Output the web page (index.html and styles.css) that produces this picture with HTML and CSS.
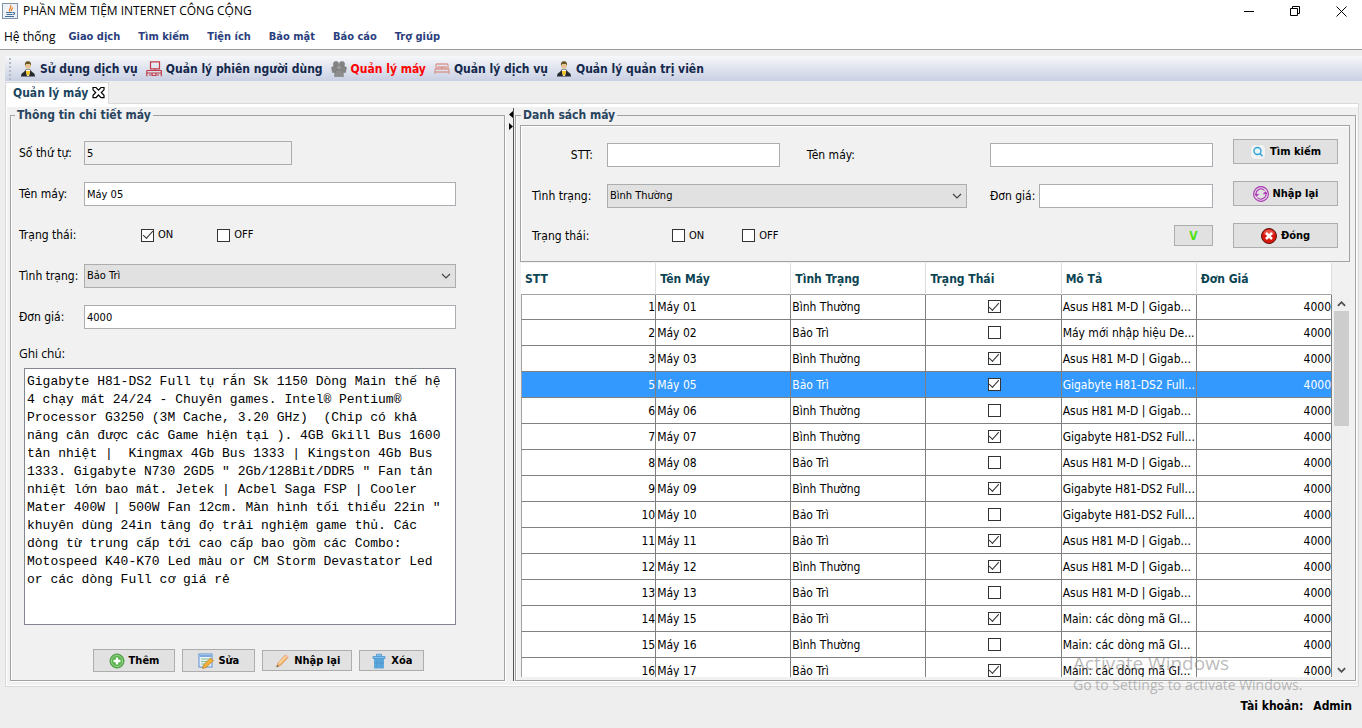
FILE: index.html
```html
<!DOCTYPE html>
<html lang="vi">
<head>
<meta charset="utf-8">
<title>PHẦN MỀM TIỆM INTERNET CÔNG CỘNG</title>
<link rel="stylesheet" href="styles.css">
</head>
<body>
<svg class="defs" aria-hidden="true">
  <symbol id="user" viewBox="0 0 16 16"><path d="M1 15.500c0-2.500 1-3.500 3-4.500l2-3h4l2 3c2 1 3 2 3 4.500z" fill="#26282c"/><path d="M5.500 8.500h5L9 15H7z" fill="#fff"/><path d="M6 10h4l-.5 3L8 15l-1.500-2z" fill="#f3c51c"/><circle cx="8" cy="4.800" r="3" fill="#e5c497"/><path d="M5 5C4.500 1.500 6 .3 8 .3S11.500 1.500 11 5l-1-2H6z" fill="#6b5524"/></symbol>
  <symbol id="desk" viewBox="0 0 16 16"><path d="M4.500.8h9v7h-9zM9 8v2M.8 9.500h14.500v5.800M.8 9.500v5.800M.8 12h14.500M6 12v2.500h4V12M3 14h2M11 14h2" fill="none" stroke="#c03a48" stroke-width="1.200"/></symbol>
  <symbol id="group" viewBox="0 0 16 16"><g fill="#858585" stroke="#6f6f6f" stroke-width=".5"><circle cx="5" cy="3" r="2.600"/><circle cx="11" cy="3" r="2.600"/><path d="M.5 6.500 3 5h10l2.500 1.500-1 5H1.500z"/><circle cx="8" cy="6.500" r="2.700" fill="#999"/><path d="M3.500 15.500 4 11l2-2h4l2 2 .5 4.500z" fill="#8d8d8d"/></g></symbol>
  <symbol id="bed" viewBox="0 0 16 16"><path d="M2 8V4q0-1 1-1h10q1 0 1 1v4M1 13V9q0-1 1-1h12q1 0 1 1v4M1 11h14M4 8V6h3.500v2M8.500 8V6H12v2" fill="none" stroke="#d99a94" stroke-width="1.300"/></symbol>
  <symbol id="chev" viewBox="0 0 10 6"><path d="M1 1l4 4 4-4" fill="none" stroke="#444" stroke-width="1.200"/></symbol>
  <symbol id="pencil" viewBox="0 0 16 16"><path d="M2.500 14 4 10l7-8 3 2.500-7.500 8z" fill="#f1b56c" stroke="#d3905a" stroke-width=".7"/><path d="M5 10.500 12 3" stroke="#fbdcae" stroke-width="1.300"/><path d="M2.500 14 3.300 12l1.500 1.300z" fill="#555"/><path d="m10.500 2.500 1.300-1.300 3 2.500L13.500 5z" fill="#f0b8a8"/></symbol>
</svg>

<header class="titlebar">
  <svg class="java" viewBox="0 0 16 16"><rect x=".5" y=".5" width="15" height="15" fill="#eef2f6" stroke="#7e93aa"/><path d="M8 8.500C5.500 6 10.500 5 8.500 2M9.500 8c-1-1.500 1.500-2 1-3.500" fill="none" stroke="#e8791d" stroke-width="1.200"/><path d="M4 9.500h6.500M4.500 11.500h5.500M3 13.500h9M11 9.500c2.500-.5 2 2-.5 2" fill="none" stroke="#3f6d98" stroke-width="1.100"/></svg>
  <h1>PHẦN MỀM TIỆM INTERNET CÔNG CỘNG</h1>
  <div class="winbtns">
    <button aria-label="Thu nhỏ"><svg viewBox="0 0 11 11"><path d="M0 5.500h10" stroke="#000"/></svg></button>
    <button aria-label="Khôi phục"><svg viewBox="0 0 11 11"><path d="M.5 2.500h7v7h-7zM2.500 2.500v-2h7v7h-2" fill="none" stroke="#000"/></svg></button>
    <button aria-label="Thoát"><svg viewBox="0 0 11 11"><path d="M.5.5l10 10M10.500.5l-10 10" stroke="#000"/></svg></button>
  </div>
</header>
<nav class="menu">
  <button class="sys">Hệ thống</button><button>Giao dịch</button><button>Tìm kiếm</button><button>Tiện ích</button><button>Bảo mật</button><button>Báo cáo</button><button>Trợ giúp</button>
</nav>

<div class="toolbar">
  <span class="grip"></span>
  <button><svg><use href="#user"/></svg>Sử dụng dịch vụ</button>
  <button><svg><use href="#desk"/></svg>Quản lý phiên người dùng</button>
  <button class="current"><svg><use href="#group"/></svg>Quản lý máy</button>
  <button><svg><use href="#bed"/></svg>Quản lý dịch vụ</button>
  <button><svg><use href="#user"/></svg>Quản lý quản trị viên</button>
</div>

<div class="tabs">
  <div class="tab">Quản lý máy
    <button aria-label="Đóng thẻ"><svg viewBox="0 0 13 13"><path d="M1 1.500h3l2.500 2.700L9 1.500h3v2.300L9.300 6.500 12 9.300v2.400H9L6.500 9 4 11.700H1V9.300l2.700-2.800L1 3.800z" fill="#fff" stroke="#000" stroke-width="1.200"/></svg></button>
  </div>
  <span class="tabfill"></span>
</div>

<main class="pane">
  <fieldset class="group">
    <legend>Thông tin chi tiết máy</legend>
    <form class="detail">
      <div class="row"><label for="d-no">Số thứ tự:</label><input class="text short" id="d-no" value="5" readonly></div>
      <div class="row"><label for="d-name">Tên máy:</label><input class="text" id="d-name" value="Máy 05"></div>
      <div class="row"><span class="lbl">Trạng thái:</span>
        <div class="checks"><label><input type="checkbox" checked>ON</label><label><input type="checkbox">OFF</label></div></div>
      <div class="row"><label for="d-state">Tình trạng:</label>
        <div class="combo"><select id="d-state"><option>Bảo Trì</option><option>Bình Thường</option></select><svg><use href="#chev"/></svg></div></div>
      <div class="row"><label for="d-price">Đơn giá:</label><input class="text" id="d-price" value="4000"></div>
      <label class="notelabel" for="d-note">Ghi chú:</label>
      <textarea id="d-note" spellcheck="false">Gigabyte H81-DS2 Full tụ rắn Sk 1150 Dòng Main thế hệ 4 chạy mát 24/24 - Chuyên games. Intel® Pentium® Processor G3250 (3M Cache, 3.20 GHz)  (Chip có khả năng cân được các Game hiện tại ). 4GB Gkill Bus 1600 tản nhiệt |  Kingmax 4Gb Bus 1333 | Kingston 4Gb Bus 1333. Gigabyte N730 2GD5 " 2Gb/128Bit/DDR5 " Fan tản nhiệt lớn bao mát. Jetek | Acbel Saga FSP | Cooler Mater 400W | 500W Fan 12cm. Màn hình tối thiểu 22in " khuyên dùng 24in tăng đọ trải nghiệm game thủ. Các dòng từ trung cấp tới cao cấp bao gồm các Combo: Motospeed K40-K70 Led màu or CM Storm Devastator Led or các dòng Full cơ giá rẻ</textarea>
      <div class="actions">
        <button type="button" class="btn tall"><svg viewBox="0 0 16 16"><circle cx="8" cy="8" r="7" fill="#58b14a" stroke="#4a9a45"/><circle cx="8" cy="8" r="5.600" fill="none" stroke="#a9dca0" stroke-width=".8"/><path d="M8 4.500v7M4.500 8h7" stroke="#fff" stroke-width="2.400"/></svg>Thêm</button>
        <button type="button" class="btn tall"><svg viewBox="0 0 16 16"><rect x="1" y="1" width="13" height="13" fill="#eaf3fc" stroke="#5b8fd2"/><path d="M1.500 3h12" stroke="#7fa9de" stroke-width="2"/><path d="M3 6h9M3 8.500h7M3 11h5" stroke="#85be83" stroke-width="1.200"/><path d="M4.500 15.500 5.500 12l7-7 3 2.500-7.500 7z" fill="#f4b13a" stroke="#b57a23" stroke-width=".7"/></svg>Sửa</button>
        <button type="button" class="btn"><svg><use href="#pencil"/></svg>Nhập lại</button>
        <button type="button" class="btn"><svg viewBox="0 0 16 16"><path d="M3 5h10v10.500H3z" fill="#5da8dc"/><path d="M2 3.500h12v2H2zM5.500 3.500V1.200h5v2.300" fill="#83c1ea" stroke="#4c94cb" stroke-width=".8"/><path d="M6 7v8M10 7v8M3 10h10" stroke="#4b93ca" stroke-width=".7"/></svg>Xóa</button>
      </div>
    </form>
  </fieldset>

  <div class="split"><svg viewBox="0 0 5 19"><path d="M4 0v7L0 3.500zM0 12v7l4-3.500z" fill="#000"/></svg></div>

  <fieldset class="group list">
    <legend>Danh sách máy</legend>
    <form class="filter">
      <div class="fields">
        <label class="end" for="f-no">STT:</label>
        <div class="pair"><input class="text no" id="f-no"><label for="f-name">Tên máy:</label></div>
        <div class="third"><input class="text" id="f-name"></div>
        <label for="f-state">Tình trạng:</label>
        <div class="combo"><select id="f-state"><option>Bình Thường</option><option>Bảo Trì</option></select><svg><use href="#chev"/></svg></div>
        <div class="third"><label for="f-price">Đơn giá:</label><input class="text" id="f-price"></div>
        <span class="lbl">Trạng thái:</span>
        <div class="checks"><label><input type="checkbox">ON</label><label><input type="checkbox">OFF</label></div>
        <button type="button" class="btn v">V</button>
      </div>
      <div class="side">
        <button type="button" class="btn"><svg viewBox="0 0 16 16"><rect x=".5" y=".5" width="15" height="15" rx="4" fill="#f2f2f2" stroke="#ddd"/><circle cx="7.500" cy="7" r="3.500" fill="#e5f6fd" stroke="#36a3d8" stroke-width="1.400"/><path d="m10 9.500 2.500 2.700" stroke="#36a3d8" stroke-width="1.600"/></svg>Tìm kiếm</button>
        <button type="button" class="btn"><svg viewBox="0 0 16 16"><g fill="none" stroke="#ab2fb5" stroke-width="1.100"><circle cx="8" cy="8" r="7.400"/><path d="M3.500 9.500a4.800 4.800 0 0 1 8-5M12.500 6.500a4.800 4.800 0 0 1-8 5M2 8l1.500 2L5.500 8M10.500 8l2-2L14 8"/></g></svg>Nhập lại</button>
        <button type="button" class="btn"><svg viewBox="0 0 16 16"><circle cx="8" cy="8" r="7.500" fill="#d8170d" stroke="#5a1510"/><path d="M2.500 6a5.700 5.700 0 0 1 11 0q-5.500 2-11 0" fill="#ea5146"/><path d="m5 5 6 6M11 5l-6 6" stroke="#fff" stroke-width="2.600"/></svg>Đóng</button>
      </div>
    </form>
    <div class="tablebox">
      <div class="scroller">
      <table>
        <thead><tr><th>STT</th><th>Tên Máy</th><th>Tình Trạng</th><th>Trạng Thái</th><th>Mô Tả</th><th>Đơn Giá</th></tr></thead>
        <tbody>
          <tr><td>1</td><td>Máy 01</td><td>Bình Thường</td><td><input type="checkbox" aria-label="Máy 01" checked></td><td>Asus H81 M-D | Gigab...</td><td>4000</td></tr>
          <tr><td>2</td><td>Máy 02</td><td>Bảo Trì</td><td><input type="checkbox" aria-label="Máy 02"></td><td>Máy mới nhập hiệu De...</td><td>4000</td></tr>
          <tr><td>3</td><td>Máy 03</td><td>Bình Thường</td><td><input type="checkbox" aria-label="Máy 03" checked></td><td>Asus H81 M-D | Gigab...</td><td>4000</td></tr>
          <tr class="selected"><td>5</td><td>Máy 05</td><td>Bảo Trì</td><td><input type="checkbox" aria-label="Máy 05" checked></td><td>Gigabyte H81-DS2 Full...</td><td>4000</td></tr>
          <tr><td>6</td><td>Máy 06</td><td>Bình Thường</td><td><input type="checkbox" aria-label="Máy 06"></td><td>Asus H81 M-D | Gigab...</td><td>4000</td></tr>
          <tr><td>7</td><td>Máy 07</td><td>Bình Thường</td><td><input type="checkbox" aria-label="Máy 07" checked></td><td>Gigabyte H81-DS2 Full...</td><td>4000</td></tr>
          <tr><td>8</td><td>Máy 08</td><td>Bảo Trì</td><td><input type="checkbox" aria-label="Máy 08"></td><td>Asus H81 M-D | Gigab...</td><td>4000</td></tr>
          <tr><td>9</td><td>Máy 09</td><td>Bình Thường</td><td><input type="checkbox" aria-label="Máy 09" checked></td><td>Gigabyte H81-DS2 Full...</td><td>4000</td></tr>
          <tr><td>10</td><td>Máy 10</td><td>Bảo Trì</td><td><input type="checkbox" aria-label="Máy 10"></td><td>Gigabyte H81-DS2 Full...</td><td>4000</td></tr>
          <tr><td>11</td><td>Máy 11</td><td>Bảo Trì</td><td><input type="checkbox" aria-label="Máy 11" checked></td><td>Asus H81 M-D | Gigab...</td><td>4000</td></tr>
          <tr><td>12</td><td>Máy 12</td><td>Bình Thường</td><td><input type="checkbox" aria-label="Máy 12" checked></td><td>Asus H81 M-D | Gigab...</td><td>4000</td></tr>
          <tr><td>13</td><td>Máy 13</td><td>Bảo Trì</td><td><input type="checkbox" aria-label="Máy 13"></td><td>Asus H81 M-D | Gigab...</td><td>4000</td></tr>
          <tr><td>14</td><td>Máy 15</td><td>Bảo Trì</td><td><input type="checkbox" aria-label="Máy 15" checked></td><td>Main: các dòng mã GI...</td><td>4000</td></tr>
          <tr><td>15</td><td>Máy 16</td><td>Bình Thường</td><td><input type="checkbox" aria-label="Máy 16"></td><td>Main: các dòng mã GI...</td><td>4000</td></tr>
          <tr><td>16</td><td>Máy 17</td><td>Bảo Trì</td><td><input type="checkbox" aria-label="Máy 17" checked></td><td>Main: các dòng mã GI...</td><td>4000</td></tr>
        </tbody>
      </table>
      </div>
      <div class="scrollbar"><svg class="up" viewBox="0 0 10 6"><path d="M1 5l4-4 4 4" fill="none" stroke="#505050" stroke-width="2"/></svg><span class="thumb"></span><svg class="down" viewBox="0 0 10 6"><path d="M1 1l4 4 4-4" fill="none" stroke="#505050" stroke-width="2"/></svg></div>
    </div>
  </fieldset>
</main>

<footer class="status"><span>Tài khoản:</span><span>Admin</span></footer>
<div class="watermark"><p class="big">Activate Windows</p><p>Go to Settings to activate Windows.</p></div>
</body>
</html>
```

FILE: styles.css
```css
* { box-sizing: border-box; }
body {
  margin: 0; height: 100vh; display: flex; flex-direction: column; position: relative;
  overflow: hidden; background: #eee; color: #000;
  font: 12px/16px "DejaVu Sans Condensed", "DejaVu Sans", sans-serif;
}
button, input, select, textarea { font: inherit; color: inherit; margin: 0; border-radius: 0; }
button { border: 0; background: none; padding: 0; white-space: nowrap; }
svg { flex: none; width: 16px; height: 16px; }
.defs { display: none; }

.titlebar { display: flex; align-items: center; height: 24px; padding: 0 15px 2px 2px; gap: 5px; background: #fff; }
.titlebar h1 { margin: 0; font: 12px/16px "Open Sans", sans-serif; }
.winbtns { margin-left: auto; display: flex; gap: 35px; }
.winbtns svg { width: 11px; height: 11px; }
.winbtns button { display: flex; }

.menu { display: flex; gap: 18px; height: 26px; padding: 0 4px; background: #fff; border-bottom: 1px solid #999; }
.menu button { font-weight: bold; font-size: 11px; color: #2b3f7d; }
.menu .sys { font: 12px/16px "Open Sans", sans-serif; color: #000; margin-right: -5px; }

.toolbar {
  display: flex; align-items: center; gap: 8px; height: 25px; margin: 6px 0 0 5px; padding-left: 4px;
  background: linear-gradient(#f6f7f9, #c9d0e3);
}
.toolbar button { display: flex; align-items: center; gap: 4px; font-weight: bold; color: #14284b; }
.toolbar .current { color: #f00; }
.grip { width: 2px; height: 22px; margin-right: 1px; background: repeating-linear-gradient(#b6bac4 0 2px, transparent 2px 4px); }

.tabs { display: flex; height: 22px; margin: 1px 3px 0 5px; }
.tab {
  display: flex; align-items: center; gap: 4px; padding: 0 3px 2px 7px; border: 1px solid #d9d9d9; border-bottom: 0;
  background: #fff; font-weight: bold; color: #1c4660;
}
.tab button { display: flex; }
.tab svg { width: 13px; height: 13px; }
.tabfill { flex: 1; border-bottom: 1px solid #d9d9d9; }

.pane {
  flex: 1; min-height: 0; display: grid; grid-template-columns: 495fr 10px 841fr; margin: 0 3px 0 5px;
  padding: 3px 2px 5px 4px; border: solid #d9d9d9; border-width: 0 1px 1px; background: #f1f1f1;
  box-shadow: inset 0 3px #fff, inset 1px 0 #fff, inset 0 -1px #fff;
}
.group {
  min-width: 0; min-height: 0; margin: 0; padding: 0; border: 1px solid #a3a3a3;
  box-shadow: 1px 1px #fff, inset 1px 0 #fff;
}
.group legend { margin-left: 4px; padding: 0 2px; font-weight: bold; color: #28445e; }
.split { border-right: 1px solid #555; margin: 1px 1px 0 5px; }
.split svg { display: block; width: 5px; height: 19px; margin-top: 3px; margin-left: -1px; }

.text { width: 100%; min-width: 0; height: 24px; padding: 0 2px; border: 1px solid #abadb3; background: #fff; font-size: 11px; }
.combo { display: grid; align-items: center; min-width: 0; }
.combo select { grid-area: 1 / 1; appearance: none; width: 100%; height: 24px; padding: 0 2px; border: 1px solid #adadad; background: #e1e1e1; font-size: 11px; }
.combo svg { grid-area: 1 / 1; justify-self: end; width: 10px; height: 6px; margin-right: 5px; pointer-events: none; }
input[type=checkbox] {
  appearance: none; flex: none; display: inline-grid; place-items: center; width: 13px; height: 13px;
  border: 1px solid #333; background: #fff; vertical-align: middle;
}
input[type=checkbox]:checked::before {
  content: ""; width: 9px; height: 4px; border: solid #333; border-width: 0 0 1px 1px; transform: rotate(-48deg); margin-bottom: 3px;
}
.checks { display: flex; }
.checks label { display: flex; align-items: center; gap: 4px; font-size: 11px; }
.btn {
  display: flex; align-items: center; justify-content: center; gap: 4px; height: 21px;
  border: 1px solid #adadad; background: #e1e1e1; font-weight: bold; font-size: 11px;
}

.detail { display: flex; flex-direction: column; padding: 18px 48px 0 8px; }
.row { display: grid; grid-template-columns: 65px 1fr; align-items: center; height: 24px; margin-bottom: 17px; white-space: nowrap; }
.row .short { width: 56%; background: #f0f0f0; }
.row .checks { padding-left: 57px; gap: 44px; }
.notelabel { font: 12px/16px "Open Sans", sans-serif; }
textarea {
  margin: 6px 0 0 5px; height: 257px; padding: 4px 1px 0 2px; border: 1px solid #828790; background: #fff; resize: none;
  font: 13px/18px "Liberation Mono", monospace; overflow: hidden;
}
.actions { display: flex; justify-content: center; align-items: center; gap: 7px; margin: 24px 0 0 42px; }
.actions .btn { padding: 0 11px; }
.actions .tall { height: 23px; padding: 0 15px; }

.list { display: flex; flex-direction: column; }
.list legend { margin-left: 5px; }
.filter { display: flex; gap: 20px; margin: 2px 5px 0 4px; padding: 13px 11px; border: 1px solid #a3a3a3; box-shadow: inset 1px 1px #fff; }
.fields { flex: 1; display: grid; grid-template-columns: 75px 360fr 246fr; row-gap: 17px; align-items: center; padding-top: 4px; align-content: start; white-space: nowrap; }
.fields > :nth-child(3n) { justify-self: end; }
.fields .end { text-align: right; padding-right: 14px; }
.pair { display: flex; align-items: center; gap: 27px; }
.pair .no { width: 48%; }
.third { display: flex; align-items: center; width: 100%; gap: 4px; padding-left: 23px; }
.fields .checks { padding-left: 65px; gap: 38px; }
.v { width: 39px; color: #4be10e; font-size: 12px; }
.side { display: flex; flex-direction: column; gap: 17px; width: 105px; }
.side .btn { height: 25px; }

.tablebox { flex: 1; min-height: 0; display: flex; margin: 1px 6px 3px 5px; }
.scroller { flex: 1; min-width: 0; overflow: hidden; background: #fff; }
table { width: 100%; table-layout: fixed; border-collapse: separate; border-spacing: 0; }
th { height: 32px; padding: 0 0 0 4px; text-align: left; color: #0b4452; background: #fff; border-right: 1px solid #ddd; border-bottom: 1px solid #a3a3a3; }
td { height: 26px; padding: 0 0 0 1px; overflow: hidden; white-space: nowrap; border-right: 1px solid #808080; border-bottom: 1px solid #808080; }
tbody tr:first-child td { height: 25px; }
td:first-child, td:last-child { text-align: right; }
td:first-child { border-left: 1px solid #a3a3a3; }
td:nth-child(4) { text-align: center; padding-bottom: 2px; }
.selected td { background: #3399ff; color: #fff; }
.scrollbar { display: flex; flex-direction: column; align-items: center; width: 17px; margin-top: 32px; padding: 6px 0 4px 1px; background: #f0f0f0; }
.scrollbar svg { width: 9px; height: 6px; }
.thumb { width: 15px; height: 31%; margin-top: 4px; background: #cdcdcd; }
.down { margin-top: auto; }

.status { display: flex; justify-content: flex-end; gap: 10px; height: 41px; padding: 11px 10px 0; font-weight: bold; }
.watermark { position: absolute; right: 53px; bottom: 34px; width: 236px; color: rgba(130,130,130,.55); font-family: "Open Sans", sans-serif; font-size: 14px; white-space: nowrap; pointer-events: none; }
.watermark p { margin: 0; line-height: 18px; }
.watermark .big { font-size: 19px; line-height: 26px; }
```
